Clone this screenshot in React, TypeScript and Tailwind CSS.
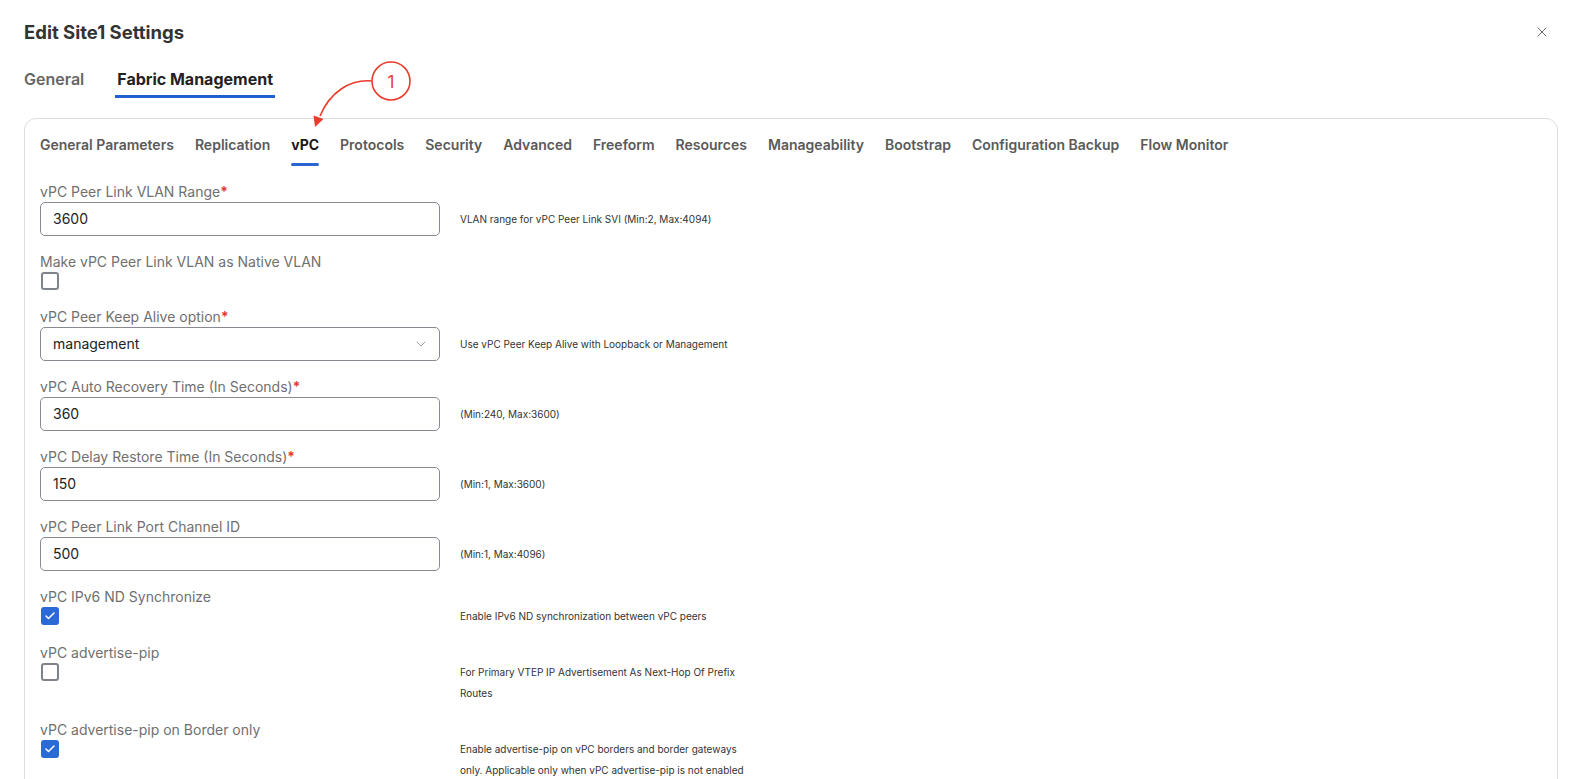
import { X, Check, ChevronDown } from "lucide-react";

const subTabs = [
  "General Parameters",
  "Replication",
  "vPC",
  "Protocols",
  "Security",
  "Advanced",
  "Freeform",
  "Resources",
  "Manageability",
  "Bootstrap",
  "Configuration Backup",
  "Flow Monitor",
];

export default function App() {
  return (
    <div
      className="relative h-[779px] w-full overflow-hidden bg-white pl-6 text-[#222]"
      style={{ fontFamily: "Inter, 'Noto Sans', sans-serif" }}
    >
      {/* Header */}
      <div className="flex items-center justify-between pr-[28px] pt-[18px]">
        <h1 className="text-[18.5px] leading-7 font-bold text-[#333]">Edit Site1 Settings</h1>
        <X className="h-4 w-4 text-[#6b6b6b]" strokeWidth={1.5} />
      </div>

      {/* Top tabs */}
      <div className="mt-[21px] flex items-start gap-[33px]">
        <span className="pb-[7px] text-base leading-6 font-semibold text-[#666]">General</span>
        <span className="-ml-[2px] border-b-[3px] border-[#1f5fcf] px-[2px] pb-1 text-base leading-6 font-bold text-[#222]">
          Fabric Management
        </span>
      </div>

      {/* Card */}
      <div className="mr-5 mt-5 rounded-xl border border-[#dddddd] px-[15px] pt-4">
        <div className="flex gap-[21px]">
          {subTabs.map((t) => (
            <div key={t} className="flex flex-col items-stretch">
              <span
                className={
                  t === "vPC"
                    ? "text-sm leading-5 font-bold text-[#1a1a1a]"
                    : "text-sm leading-5 font-semibold text-[#5a5a5a]"
                }
              >
                {t}
              </span>
              <span
                className={
                  t === "vPC"
                    ? "mt-2 h-[3px] rounded-full bg-[#2a66d2]"
                    : "mt-2 h-[3px]"
                }
              />
            </div>
          ))}
        </div>

        <div className="mt-4">
          <InputField label="vPC Peer Link VLAN Range" required value="3600" help="VLAN range for vPC Peer Link SVI (Min:2, Max:4094)" />
          <CheckField label="Make vPC Peer Link VLAN as Native VLAN" />
          <SelectField label="vPC Peer Keep Alive option" value="management" help="Use vPC Peer Keep Alive with Loopback or Management" />
          <InputField label="vPC Auto Recovery Time (In Seconds)" required value="360" help="(Min:240, Max:3600)" />
          <InputField label="vPC Delay Restore Time (In Seconds)" required value="150" help="(Min:1, Max:3600)" />
          <InputField label="vPC Peer Link Port Channel ID" value="500" help="(Min:1, Max:4096)" />
          <CheckField label="vPC IPv6 ND Synchronize" checked help="Enable IPv6 ND synchronization between vPC peers" />
          <CheckField label="vPC advertise-pip" help="For Primary VTEP IP Advertisement As Next-Hop Of Prefix Routes" />
          <CheckField
            label="vPC advertise-pip on Border only"
            checked
            help="Enable advertise-pip on vPC borders and border gateways only. Applicable only when vPC advertise-pip is not enabled"
          />
        </div>
      </div>

      {/* Callout */}
      <svg className="pointer-events-none absolute left-0 top-0" width="460" height="140" viewBox="0 0 460 140">
        <path d="M372 81 C 350 79, 330 92, 320 116" fill="none" stroke="#ec3b2b" strokeWidth="1.6" />
        <polygon points="315,127 323.5,119 313.5,115.5" fill="#ec3b2b" />
        <circle cx="391" cy="81" r="19" fill="white" stroke="#ec3b2b" strokeWidth="1.6" />
        <text x="391" y="87.5" textAnchor="middle" fontSize="17" fill="#ec3b2b" fontFamily="Inter, sans-serif">
          1
        </text>
      </svg>
    </div>
  );
}

function Label({ text, required }: { text: string; required?: boolean }) {
  return (
    <div className="text-sm leading-5 text-[#707070]">
      {text}
      {required && <span className="font-semibold text-[#e0322b]">*</span>}
    </div>
  );
}

function Help({ text }: { text: string }) {
  return <p className="w-[292px] text-[10px] leading-[21px] text-[#333]">{text}</p>;
}

function InputField({ label, value, help, required }: { label: string; value: string; help: string; required?: boolean }) {
  return (
    <div className="mb-4">
      <Label text={label} required={required} />
      <div className="flex items-center gap-5">
        <div className="flex h-[34px] w-[400px] items-center rounded-[5px] border-[1.5px] border-[#878b91] px-3 text-sm text-[#222]">
          {value}
        </div>
        <Help text={help} />
      </div>
    </div>
  );
}

function SelectField({ label, value, help }: { label: string; value: string; help: string }) {
  return (
    <div className="mb-4">
      <Label text={label} required />
      <div className="flex items-center gap-5">
        <div className="flex h-[34px] w-[400px] items-center justify-between rounded-[5px] border-[1.5px] border-[#878b91] pl-3 pr-[10px] text-sm text-[#222]">
          {value}
          <ChevronDown className="h-4 w-4 text-[#a0a0a0]" strokeWidth={1.5} />
        </div>
        <Help text={help} />
      </div>
    </div>
  );
}

function CheckField({ label, checked, help }: { label: string; checked?: boolean; help?: string }) {
  return (
    <div className="mb-4">
      <Label text={label} />
      <div className="flex items-start gap-5">
        <div className="h-[19px] w-[400px] pl-px">
          {checked ? (
            <div className="flex h-[18px] w-[18px] items-center justify-center rounded-[3px] bg-[#2a6ad5]">
              <Check className="h-3 w-3 text-white" strokeWidth={3} />
            </div>
          ) : (
            <div className="h-[18px] w-[18px] rounded-[3px] border-2 border-[#7f848b]" />
          )}
        </div>
        {help && (
          <div className="-mt-px">
            <Help text={help} />
          </div>
        )}
      </div>
    </div>
  );
}
